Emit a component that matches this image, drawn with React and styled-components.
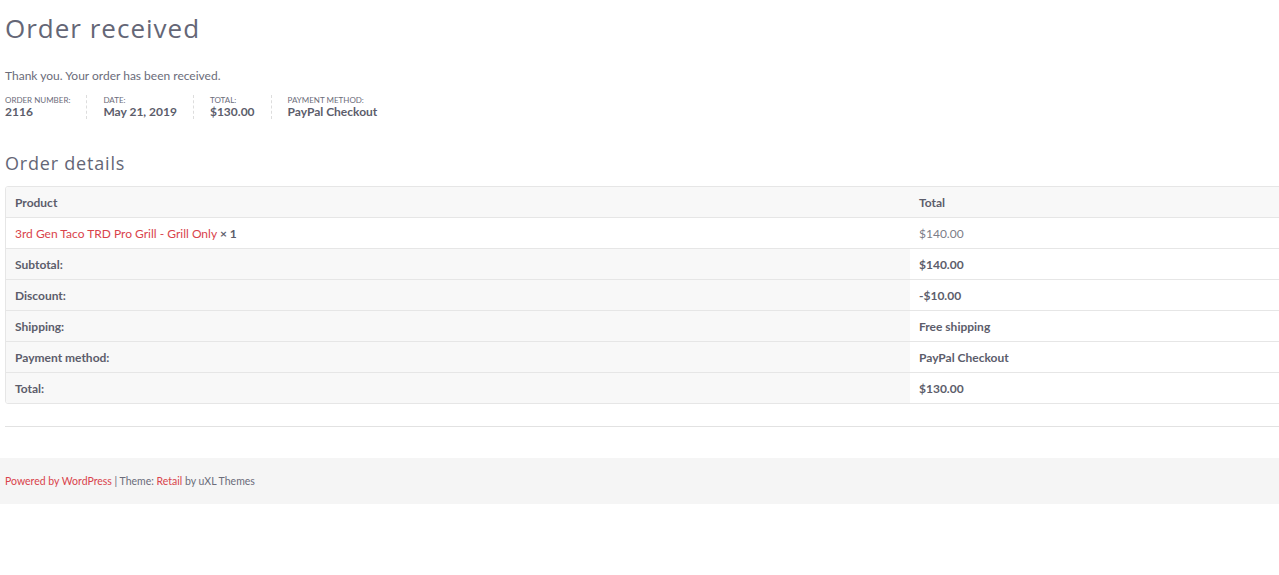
import React from 'react'
import styled, { createGlobalStyle } from 'styled-components'

const GlobalStyle = createGlobalStyle`
    body {
        margin: 0;
        background: #fff;
        font-family: "Lato", "Liberation Sans", sans-serif;
        color: #6b6c7a;
        overflow-x: hidden;
    }
`

const Page = styled.div`
    padding-left: 5px;
`
const Title = styled.h1`
    margin: 0;
    padding-top: 12px;
    font-family: "Open Sans", "DejaVu Sans", sans-serif;
    font-weight: 400;
    font-size: 26px;
    letter-spacing: 1px;
    line-height: 32px;
    color: #646676;
`
const Thanks = styled.p`
    margin: 24px 0 0;
    font-size: 12px;
    line-height: 16px;
`
const Overview = styled.ul`
    list-style: none;
    margin: 11px 0 0;
    padding: 0;
    display: flex;
`
const OverviewItem = styled.li`
    padding: 0 16px;
    border-left: 1px dashed #ddd;
    display: flex;
    flex-direction: column;
    &:first-child {
        padding-left: 0;
        border-left: none;
    }
`
const Label = styled.span`
    font-size: 8px;
    line-height: 10px;
    text-transform: uppercase;
    color: #6b6c7a;
`
const Value = styled.strong`
    font-size: 12px;
    line-height: 14px;
    font-weight: 700;
    color: #5c5d6b;
`
const SubTitle = styled.h2`
    margin: 32px 0 0;
    font-family: "Open Sans", "DejaVu Sans", sans-serif;
    font-weight: 400;
    font-size: 18px;
    letter-spacing: 0.8px;
    line-height: 24px;
    color: #646676;
`
const Table = styled.table`
    margin-top: 11px;
    width: calc(100% + 4px);
    border-collapse: separate;
    border-spacing: 0;
    border: 1px solid #e6e6e6;
    border-radius: 3px;
    overflow: hidden;
    font-size: 12px;
    color: #5c5d6b;
    thead tr:first-child > * {
        border-top: none;
    }
`
const Cell = styled.td`
    height: 30px;
    padding: 0 9px;
    border-top: 1px solid #e6e6e6;
    text-align: left;
    font-weight: ${p => (p.$bold ? 700 : 400)};
    color: ${p => (p.$muted ? '#7c7d88' : '#5c5d6b')};
    background: ${p => (p.$shade ? '#f8f8f8' : '#fff')};
    width: ${p => p.$w || 'auto'};
`
const ProductLink = styled.a`
    color: #d9434b;
    text-decoration: none;
`
const Qty = styled.strong`
    color: #5c5d6b;
`
const Rule = styled.hr`
    margin: 22px 0 0;
    border: none;
    border-top: 1px solid #e2e2e2;
`
const Footer = styled.footer`
    margin-top: 31px;
    height: 46px;
    display: flex;
    align-items: center;
    padding-left: 5px;
    background: #f5f5f5;
    font-size: 10.5px;
    color: #6b6c7a;
`
const FooterLink = styled.a`
    color: #d9434b;
    text-decoration: none;
`

const totals = [
    ['Subtotal:', '$140.00'],
    ['Discount:', '-$10.00'],
    ['Shipping:', 'Free shipping'],
    ['Payment method:', 'PayPal Checkout'],
    ['Total:', '$130.00'],
]

const App = () => {
  return (
    <>
        <GlobalStyle />
        <Page>
            <Title>Order received</Title>
            <Thanks>Thank you. Your order has been received.</Thanks>
            <Overview>
                <OverviewItem><Label>Order number:</Label><Value>2116</Value></OverviewItem>
                <OverviewItem><Label>Date:</Label><Value>May 21, 2019</Value></OverviewItem>
                <OverviewItem><Label>Total:</Label><Value>$130.00</Value></OverviewItem>
                <OverviewItem><Label>Payment method:</Label><Value>PayPal Checkout</Value></OverviewItem>
            </Overview>
            <SubTitle>Order details</SubTitle>
            <Table>
                <thead>
                    <tr>
                        <Cell as="th" $bold $shade $w="886px">Product</Cell>
                        <Cell as="th" $bold $shade>Total</Cell>
                    </tr>
                </thead>
                <tbody>
                    <tr>
                        <Cell>
                            <ProductLink href="#">3rd Gen Taco TRD Pro Grill - Grill Only</ProductLink> <Qty>× 1</Qty>
                        </Cell>
                        <Cell $muted>$140.00</Cell>
                    </tr>
                </tbody>
                <tfoot>
                    {totals.map(([k, v]) => (
                        <tr key={k}>
                            <Cell as="th" $bold $shade>{k}</Cell>
                            <Cell $bold>{v}</Cell>
                        </tr>
                    ))}
                </tfoot>
            </Table>
            <Rule />
        </Page>
        <Footer>
            <FooterLink href="#">Powered by WordPress</FooterLink>&nbsp;| Theme:&nbsp;<FooterLink href="#">Retail</FooterLink>&nbsp;by uXL Themes
        </Footer>
    </>
  )
}
export default App
